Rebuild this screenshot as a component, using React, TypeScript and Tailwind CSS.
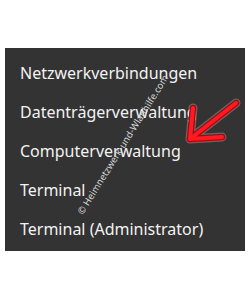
import React from "react";

const items = [
  "Netzwerkverbindungen",
  "Datenträgerverwaltung",
  "Computerverwaltung",
  "Terminal",
  "Terminal (Administrator)",
];

export default function App() {
  return (
    <main className="relative w-[250px] h-[300px] bg-white overflow-hidden">
      <div className="pt-[48px] px-[5px]">
        <div className="h-[203px] bg-[#333333] pl-[15px] pt-[6px] font-['Noto_Sans',sans-serif] text-[16px] text-[#f2f2f2]">
          {items.map((t) => (
            <div key={t} className="leading-[39px] whitespace-nowrap">
              {t}
            </div>
          ))}
        </div>
      </div>

      {/* watermark */}
      <div className="absolute left-[76px] top-[211px] origin-top-left -rotate-[58deg] whitespace-nowrap font-['Noto_Sans',sans-serif] text-[9.5px] leading-none text-[#d8d8d8]">
        © Heimnetzwerk-und-Wlanhilfe.com
      </div>

      {/* red arrow */}
      <svg className="absolute left-0 top-0" width="250" height="300" viewBox="0 0 250 300">
        <g fill="none" strokeLinecap="round" strokeLinejoin="round">
          <path d="M236 103 L190 139 M193 108 L190 139 L222 137" stroke="#f5b5b5" strokeOpacity="0.35" strokeWidth="9" />
          <path d="M236 103 L190 139 M193 108 L190 139 L222 137" stroke="#9e0b12" strokeWidth="6.5" />
          <path d="M236 103 L190 139 M193 108 L190 139 L222 137" stroke="#ff1a22" strokeWidth="4" />
        </g>
      </svg>
    </main>
  );
}
